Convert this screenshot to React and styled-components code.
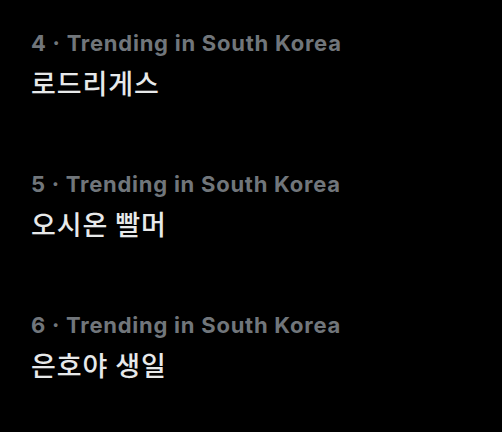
import React from "react";
import styled, { createGlobalStyle } from "styled-components";

const GlobalStyle = createGlobalStyle`
  html, body {
    margin: 0;
    padding: 0;
    background: #000;
  }
  body {
    width: 502px;
    height: 432px;
    overflow: hidden;
  }
`;

const TrendList = styled.section`
  display: flex;
  flex-direction: column;
  padding: 30px 0 0 31px;
  background: #000;
  min-height: 432px;
  box-sizing: border-box;
`;

const TrendItem = styled.article`
  display: flex;
  flex-direction: column;
  height: 141px;
`;

const Context = styled.div`
  font-family: Inter, "Noto Sans", sans-serif;
  font-weight: 700;
  font-size: 22px;
  line-height: 27px;
  color: #71767b;
  letter-spacing: 0.75px;
`;

const Topic = styled.div`
  font-family: "Noto Sans CJK KR", "Noto Sans", sans-serif;
  font-weight: 500;
  font-size: 27px;
  line-height: 34px;
  letter-spacing: 0.9px;
  color: #e7e9ea;
  margin-top: 9px;
`;

const trends = [
  { rank: 4, place: "South Korea", topic: "로드리게스" },
  { rank: 5, place: "South Korea", topic: "오시온 빨머" },
  { rank: 6, place: "South Korea", topic: "은호야 생일" },
];

export default function App() {
  return (
    <>
      <GlobalStyle />
      <TrendList>
        {trends.map((t) => (
          <TrendItem key={t.rank}>
            <Context>
              {t.rank} · Trending in {t.place}
            </Context>
            <Topic>{t.topic}</Topic>
          </TrendItem>
        ))}
      </TrendList>
    </>
  );
}
